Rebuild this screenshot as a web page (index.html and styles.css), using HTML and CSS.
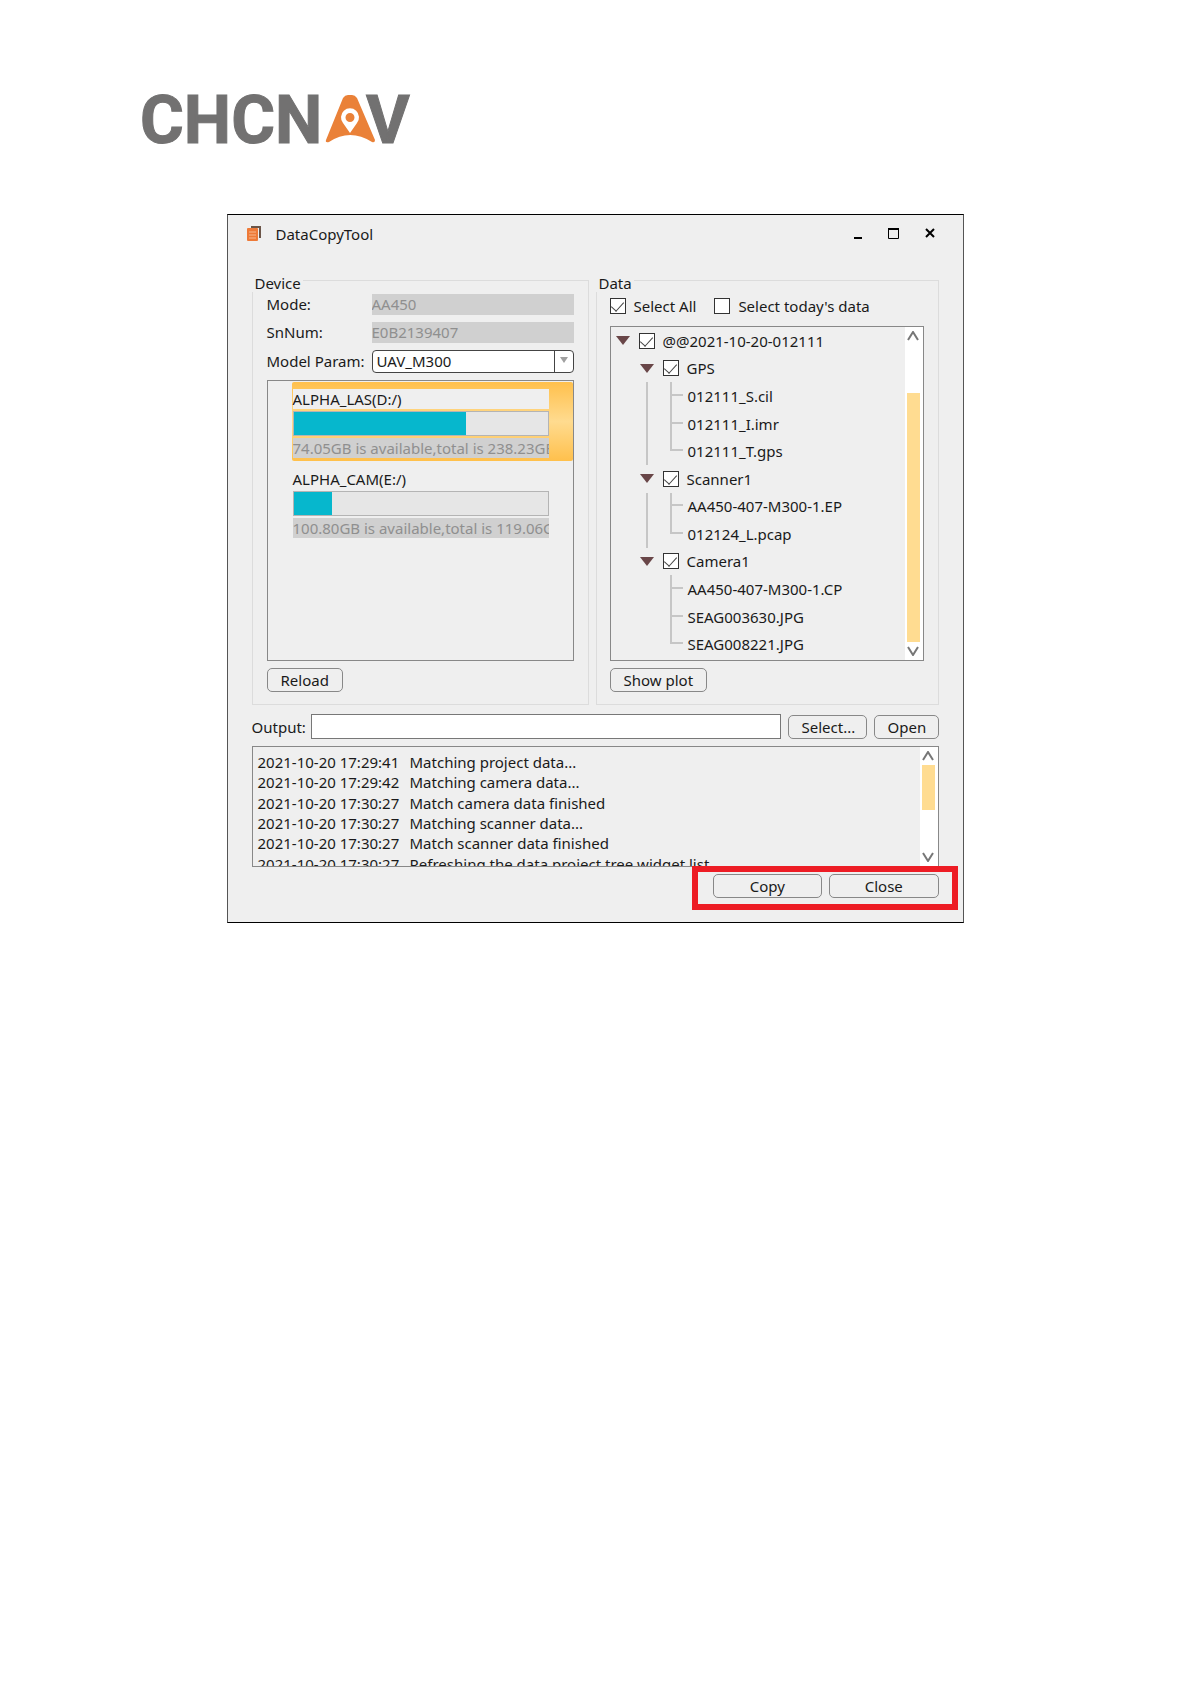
FILE: index.html
```html
<!DOCTYPE html>
<html lang="en">
<head>
<meta charset="utf-8">
<meta name="viewport" content="width=device-width, initial-scale=1">
<title>DataCopyTool</title>
<link rel="stylesheet" href="styles.css">
</head>
<body>
<header class="page-header">
  <svg class="logo" viewBox="0 0 270 50" role="img" aria-label="CHCNAV">
    <text class="logo-text" x="-2" y="49">CHCN</text>
    <text class="logo-text" x="224" y="49">V</text>
    <path class="logo-mark" d="M201 4 Q203 1 206 1 H210 Q213 1 215 4 L233 46 Q233 49 230 48 Q208 34 187 48 Q183 49 184 46 Z"/>
    <path class="logo-pin" fill-rule="evenodd" d="M208 39 L201 29 A9 9 0 1 1 215 29 Z M208 19 A4 4 0 1 0 208 28 A4 4 0 1 0 208 19 Z"/>
  </svg>
</header>

<main class="window">
  <div class="titlebar">
    <svg class="app-icon" viewBox="0 0 14 16" aria-hidden="true">
      <path d="M4 1H13V12" fill="none" stroke="#6b5548" stroke-width="2"/>
      <rect x="0" y="2" width="11" height="13" rx="1" fill="#ee7a38"/>
      <path d="M2 6H9M2 9H9M2 12H9" stroke="#f8b78c" stroke-width="1"/>
    </svg>
    <h1 class="title">DataCopyTool</h1>
    <div class="window-controls">
      <button type="button" class="control" aria-label="Minimize"><svg viewBox="0 0 12 12"><path d="M2 10H10" stroke="#000" stroke-width="2"/></svg></button>
      <button type="button" class="control" aria-label="Maximize"><svg viewBox="0 0 12 12"><path d="M0.5 1V10.5H10.5V1" fill="none" stroke="#000" stroke-width="1"/><path d="M0 1H11" stroke="#000" stroke-width="2"/></svg></button>
      <button type="button" class="control" aria-label="Close window"><svg viewBox="0 0 12 12"><path d="M2 1L10 9M10 1L2 9" stroke="#000" stroke-width="2"/></svg></button>
    </div>
  </div>

  <div class="content">
    <div class="groups">
      <fieldset class="group group-device">
        <legend>Device</legend>
        <div class="group-body">
          <div class="form">
            <label for="mode">Mode:</label>
            <input id="mode" class="readout" value="AA450" disabled>
            <label for="sn">SnNum:</label>
            <input id="sn" class="readout" value="E0B2139407" disabled>
            <label for="model">Model Param:</label>
            <div class="combo">
              <select id="model"><option>UAV_M300</option></select>
            </div>
          </div>
          <ul class="disks">
            <li class="disk selected">
              <label class="disk-name" for="disk-d">ALPHA_LAS(D:/)</label>
              <progress id="disk-d" class="disk-bar" value="68" max="100"></progress>
              <div class="disk-info">74.05GB is available,total is 238.23GB</div>
            </li>
            <li class="disk">
              <label class="disk-name" for="disk-e">ALPHA_CAM(E:/)</label>
              <progress id="disk-e" class="disk-bar" value="15" max="100"></progress>
              <div class="disk-info">100.80GB is available,total is 119.06GB</div>
            </li>
          </ul>
          <button type="button" class="button">Reload</button>
        </div>
      </fieldset>

      <fieldset class="group group-data">
        <legend>Data</legend>
        <div class="group-body">
          <div class="filters">
            <label class="check"><input type="checkbox" checked>Select All</label>
            <label class="check"><input type="checkbox">Select today's data</label>
          </div>
          <div class="tree">
            <ul class="tree-rows">
              <li><i class="cell arrow"></i><label class="check"><input type="checkbox" checked>@@2021-10-20-012111</label></li>
              <li><i class="cell"></i><i class="cell arrow"></i><label class="check"><input type="checkbox" checked>GPS</label></li>
              <li><i class="cell"></i><i class="cell line"></i><i class="cell line branch"></i><span class="file">012111_S.cil</span></li>
              <li><i class="cell"></i><i class="cell line"></i><i class="cell line branch"></i><span class="file">012111_I.imr</span></li>
              <li><i class="cell"></i><i class="cell line"></i><i class="cell line branch last"></i><span class="file">012111_T.gps</span></li>
              <li><i class="cell"></i><i class="cell arrow"></i><label class="check"><input type="checkbox" checked>Scanner1</label></li>
              <li><i class="cell"></i><i class="cell line"></i><i class="cell line branch"></i><span class="file">AA450-407-M300-1.EP</span></li>
              <li><i class="cell"></i><i class="cell line"></i><i class="cell line branch last"></i><span class="file">012124_L.pcap</span></li>
              <li><i class="cell"></i><i class="cell arrow"></i><label class="check"><input type="checkbox" checked>Camera1</label></li>
              <li><i class="cell"></i><i class="cell"></i><i class="cell line branch"></i><span class="file">AA450-407-M300-1.CP</span></li>
              <li><i class="cell"></i><i class="cell"></i><i class="cell line branch"></i><span class="file">SEAG003630.JPG</span></li>
              <li><i class="cell"></i><i class="cell"></i><i class="cell line branch last"></i><span class="file">SEAG008221.JPG</span></li>
            </ul>
            <div class="scrollbar scrollbar-tree" aria-hidden="true">
              <svg viewBox="0 0 12 10"><path d="M1 9L6 1L11 9"/></svg>
              <div class="track"><div class="thumb"></div></div>
              <svg viewBox="0 0 12 10"><path d="M1 1L6 9L11 1"/></svg>
            </div>
          </div>
          <button type="button" class="button">Show plot</button>
        </div>
      </fieldset>
    </div>

    <div class="output">
      <label for="output">Output:</label>
      <input id="output" class="path">
      <button type="button" class="button button-select">Select...</button>
      <button type="button" class="button button-open">Open</button>
    </div>

    <div class="log">
      <ol class="log-rows">
        <li><time>2021-10-20 17:29:41</time><span>Matching project data...</span></li>
        <li><time>2021-10-20 17:29:42</time><span>Matching camera data...</span></li>
        <li><time>2021-10-20 17:30:27</time><span>Match camera data finished</span></li>
        <li><time>2021-10-20 17:30:27</time><span>Matching scanner data...</span></li>
        <li><time>2021-10-20 17:30:27</time><span>Match scanner data finished</span></li>
        <li><time>2021-10-20 17:30:27</time><span>Refreshing the data project tree widget list</span></li>
      </ol>
      <div class="scrollbar scrollbar-log" aria-hidden="true">
        <svg viewBox="0 0 12 10"><path d="M1 9L6 1L11 9"/></svg>
        <div class="track"><div class="thumb"></div></div>
        <svg viewBox="0 0 12 10"><path d="M1 1L6 9L11 1"/></svg>
      </div>
    </div>

    <div class="actions">
      <button type="button" class="button">Copy</button>
      <button type="button" class="button">Close</button>
    </div>
  </div>
</main>
</body>
</html>
```
FILE: styles.css
```css
* {
  box-sizing: border-box;
}

body {
  margin: 0;
  background: #fff;
  color: #1a1a1a;
  font: 15px/20px "Noto Sans", "Open Sans", sans-serif;
}

input,
select,
button {
  margin: 0;
  color: inherit;
  font: inherit;
}

ul,
ol {
  margin: 0;
  padding: 0;
  list-style: none;
}

/* Page header */
.page-header {
  padding: 94px 142px 70px;
}

.logo {
  display: block;
  width: 270px;
  height: 50px;
  overflow: visible;
}

.logo-text {
  fill: #727171;
  stroke: #727171;
  stroke-width: 1px;
  font: 700 67px Roboto, sans-serif;
}

.logo-mark {
  fill: #ea8138;
}

.logo-pin {
  fill: #fff;
}

/* Application window */
.window {
  max-width: 737px;
  margin: 0 auto;
  border: 1px solid #555;
  border-top-color: #000;
  border-bottom-color: #000;
  background: #efefef;
}

.titlebar {
  display: flex;
  align-items: center;
  height: 40px;
  padding: 0 21px 2px 19px;
}

.app-icon {
  width: 14px;
  height: 16px;
}

.title {
  flex: 1;
  margin: 0 0 0 15px;
  font-size: 15px;
  font-weight: 400;
}

.window-controls {
  display: flex;
  gap: 12px;
}

.control {
  display: grid;
  place-items: center;
  width: 24px;
  height: 24px;
  padding: 0;
  border: 0;
  background: none;
}

.control svg {
  width: 12px;
  height: 12px;
}

.content {
  padding: 13px 24px 24px;
}

/* Group boxes */
.groups {
  display: grid;
  grid-template-columns: 337fr 343fr;
  gap: 7px;
}

.group {
  min-width: 0;
  margin: 0;
  padding: 0 14px 12px;
  border: 1px solid #dcdcdc;
}

.group-data {
  padding-left: 13px;
}

.group legend {
  margin-left: -15px;
  padding: 7px 2px 1px 3px;
  background: #efefef;
  line-height: 16px;
}

.group-data legend {
  margin-left: -14px;
}

.group-body {
  display: flex;
  flex-direction: column;
  align-items: flex-start;
  gap: 7px;
  padding-top: 2px;
}

.form {
  display: grid;
  grid-template-columns: 105px 1fr;
  align-items: center;
  gap: 7px 0;
  width: 100%;
}

.form label {
  padding-bottom: 2px;
  line-height: 18px;
}

.readout {
  width: 100%;
  height: 21px;
  padding: 0 0 2px;
  border: 0;
  background: #d0d0d0;
  color: #8f8f8f;
}

.combo {
  position: relative;
  height: 23px;
}

.combo select {
  display: block;
  width: 100%;
  height: 23px;
  padding: 0 24px 2px 4px;
  border: 1px solid #444;
  border-radius: 4px;
  background: #fff;
  appearance: none;
}

.combo::before {
  content: "";
  position: absolute;
  top: 0;
  right: 19px;
  bottom: 0;
  width: 1px;
  background: #444;
}

.combo::after {
  content: "";
  position: absolute;
  top: 7px;
  right: 6px;
  border: 4px solid transparent;
  border-top: 6px solid #a0a0a0;
  border-bottom: 0;
}

/* Disk list */
.disks {
  width: 100%;
  height: 281px;
  padding: 1px 0 0 24px;
  border: 1px solid #888;
}

.disk {
  display: grid;
  gap: 2px;
  margin-bottom: 1px;
  padding: 7px 24px 3px 1px;
}

.disk.selected {
  border-radius: 2px;
  background: linear-gradient(#ffc04c, #ffdb8f 50%, #ffc04c);
}

.disk-name {
  height: 20px;
  background: #efefef;
}

.disk-bar {
  width: 100%;
  height: 25px;
  border: 1px solid #b4b4b4;
  background: #e6e6e6;
  appearance: none;
}

.disk-bar::-webkit-progress-bar {
  background: #e6e6e6;
}

.disk-bar::-webkit-progress-value {
  background: #06b7cd;
}

.disk-info {
  height: 20px;
  overflow: hidden;
  background: #d0d0d0;
  color: #8f8f8f;
  white-space: nowrap;
}

/* Check boxes */
.filters {
  display: flex;
  align-items: center;
  gap: 18px;
  height: 23px;
  margin-bottom: 2px;
}

.check {
  display: flex;
  align-items: center;
  gap: 8px;
  white-space: nowrap;
}

.check input {
  display: grid;
  flex: none;
  place-items: center;
  width: 16px;
  height: 16px;
  border: 1px solid #333;
  background: #fff;
  appearance: none;
}

.check input:checked::after {
  content: "";
  width: 6px;
  height: 11px;
  margin-bottom: 4px;
  border: solid #444;
  border-width: 0 1px 1px 0;
  transform: rotate(42deg);
}

/* Project tree */
.tree {
  display: flex;
  width: 100%;
  height: 335px;
  border: 1px solid #888;
}

.tree-rows {
  display: grid;
  flex: 1;
  grid-template-rows: repeat(12, 1fr);
  min-width: 0;
  padding-bottom: 2px;
}

.tree-rows li {
  display: flex;
  align-items: center;
}

.tree-rows .check {
  margin-left: 4px;
}

.cell {
  position: relative;
  flex: none;
  align-self: stretch;
  width: 24px;
}

.arrow {
  display: grid;
  place-items: center;
}

.arrow::before {
  content: "";
  border: 7px solid transparent;
  border-top: 9px solid #694648;
  border-bottom: 0;
}

.line::before {
  content: "";
  position: absolute;
  top: 0;
  bottom: 0;
  left: 11px;
  width: 2px;
  background: #c6c6c6;
}

.last::before {
  bottom: 50%;
}

.branch::after {
  content: "";
  position: absolute;
  top: calc(50% - 2px);
  right: 0;
  left: 12px;
  height: 2px;
  background: #c6c6c6;
}

.file {
  margin-left: 5px;
}

/* Scroll bars */
.scrollbar {
  display: flex;
  flex: none;
  flex-direction: column;
  align-items: center;
  width: 18px;
  padding: 4px 1px 4px 0;
  background: #fff;
}

.scrollbar svg {
  width: 12px;
  height: 10px;
  fill: none;
  stroke: #777;
  stroke-width: 2;
}

.track {
  display: flex;
  flex: 1;
  flex-direction: column;
  margin: 4px 0;
}

.thumb {
  width: 13px;
  background: #ffdc91;
}

.scrollbar-tree .track {
  justify-content: flex-end;
}

.scrollbar-tree .thumb {
  height: 84%;
}

.scrollbar-log .thumb {
  height: 54%;
}

/* Buttons */
.button {
  height: 24px;
  padding: 0 13px;
  border: 1px solid #888;
  border-radius: 5px;
  background: #efefef;
  line-height: 20px;
  white-space: nowrap;
}

/* Output path */
.output {
  display: grid;
  grid-template-columns: 52px 1fr 79px 65px;
  align-items: center;
  gap: 7px;
  margin-top: 9px;
}

.path {
  width: 100%;
  height: 25px;
  padding: 0 4px;
  border: 1px solid #777;
  background: #fff;
}

/* Log */
.log {
  display: flex;
  height: 121px;
  margin-top: 7px;
  overflow: hidden;
  border: 1px solid #888;
}

.log-rows {
  display: grid;
  flex: 1;
  grid-template-rows: repeat(6, 1fr);
  height: 127px;
  padding: 5px 0 0 5px;
}

.log-rows li {
  display: grid;
  grid-template-columns: 152px 1fr;
}

/* Dialog actions */
.actions {
  display: flex;
  position: relative;
  gap: 7px;
  width: 226px;
  margin: 7px 0 0 auto;
}

.actions .button {
  flex: 1;
}

.actions::after {
  content: "";
  position: absolute;
  inset: -8px -19px -12px -21px;
  border: 6px solid #ed1c24;
  pointer-events: none;
}
```
